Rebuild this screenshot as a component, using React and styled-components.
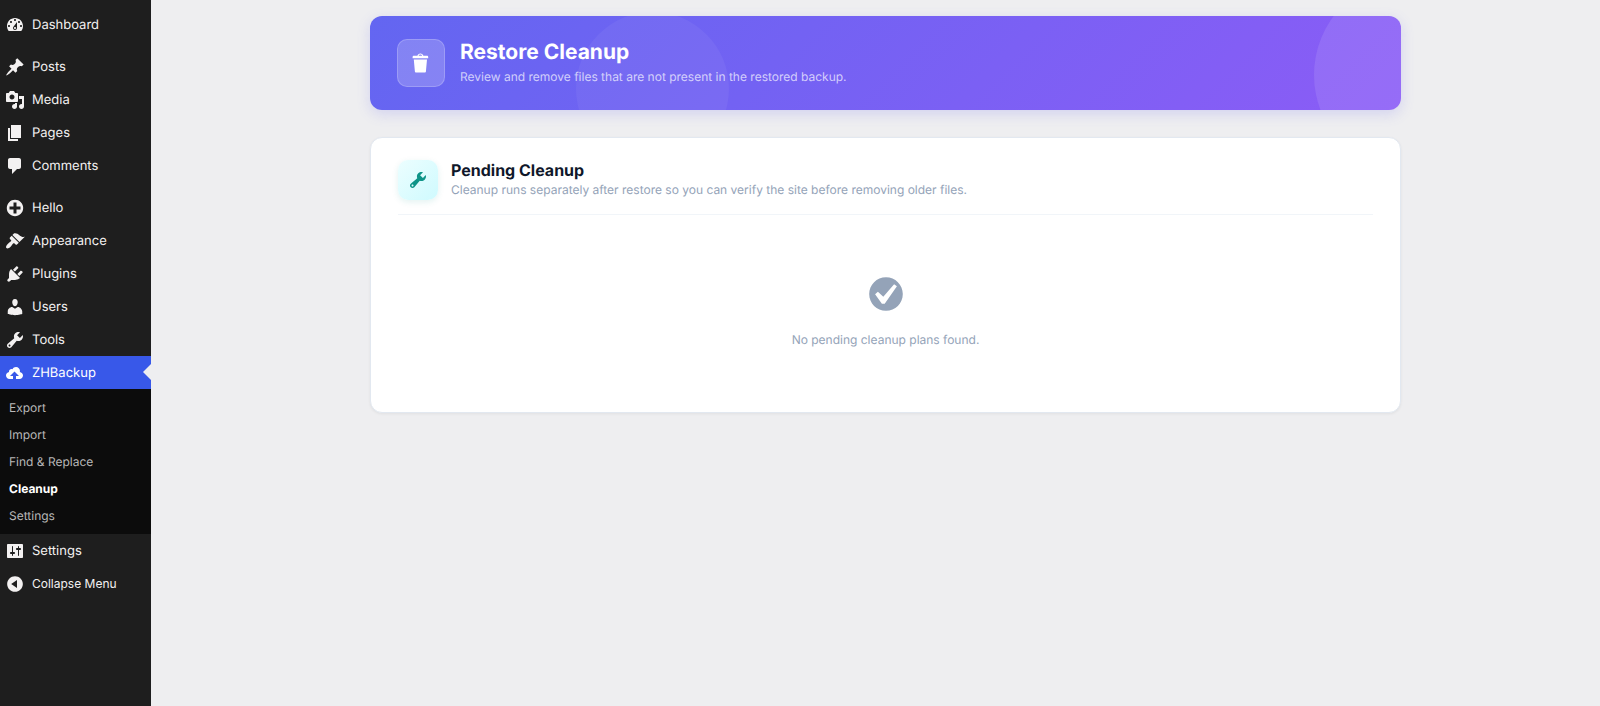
import React from "react";
import styled, { createGlobalStyle, css } from "styled-components";

const ICONS = {
  dashboard:
    "M3.76 16h12.48c1.1-1.37 1.76-3.11 1.76-5 0-4.42-3.58-8-8-8s-8 3.58-8 8c0 1.89.66 3.63 1.76 5zM10 4c.55 0 1 .45 1 1s-.45 1-1 1-1-.45-1-1 .45-1 1-1zM6 6c.55 0 1 .45 1 1s-.45 1-1 1-1-.45-1-1 .45-1 1-1zm8 0c.55 0 1 .45 1 1s-.45 1-1 1-1-.45-1-1 .45-1 1-1zm-5.37 5.55L12 7v6c0 1.1-.9 2-2 2s-2-.9-2-2c0-.57.24-1.08.63-1.45zM4 10c.55 0 1 .45 1 1s-.45 1-1 1-1-.45-1-1 .45-1 1-1zm12 0c.55 0 1 .45 1 1s-.45 1-1 1-1-.45-1-1 .45-1 1-1zm-5 3c0-.55-.45-1-1-1s-1 .45-1 1 .45 1 1 1 1-.45 1-1z",
  posts:
    "M10.44 3.02l1.82-1.82 6.36 6.35-1.83 1.82c-1.05-.68-2.48-.57-3.41.36l-.75.75c-.92.93-1.04 2.35-.35 3.41l-1.83 1.82-2.41-2.41-2.8 2.79c-.42.42-3.38 2.71-3.8 2.29s1.86-3.39 2.28-3.81l2.79-2.79L4.1 9.36l1.83-1.82c1.05.69 2.48.57 3.4-.36l.75-.75c.93-.92 1.05-2.35.36-3.41z",
  media:
    "M13 11V4c0-.55-.45-1-1-1h-1.67L9 1H5L3.67 3H2c-.55 0-1 .45-1 1v7c0 .55.45 1 1 1h10c.55 0 1-.45 1-1zM7 4.5c1.38 0 2.5 1.12 2.5 2.5S8.38 9.5 7 9.5 4.5 8.38 4.5 7 5.62 4.5 7 4.5zM14 6h5v10.5c0 1.38-1.12 2.5-2.5 2.5S14 17.88 14 16.5s1.12-2.5 2.5-2.5c.17 0 .34.02.5.05V9h-3V6zm-4 8.05V13h2v3.5c0 1.38-1.12 2.5-2.5 2.5S7 17.88 7 16.5 8.12 14 9.5 14c.17 0 .34.02.5.05z",
  pages: "M6 15V2h10v13H6zm-1 1h8v2H3V5h2v11z",
  comments:
    "M5 2h9c1.1 0 2 .9 2 2v7c0 1.1-.9 2-2 2h-2l-5 5v-5H5c-1.1 0-2-.9-2-2V4c0-1.1.9-2 2-2z",
  plus:
    "M15.8 4.2c3.2 3.21 3.2 8.39 0 11.6-3.21 3.2-8.39 3.2-11.6 0C1 12.59 1 7.41 4.2 4.2 7.41 1 12.59 1 15.8 4.2zm-4.3 11.3v-4h4v-3h-4v-4h-3v4h-4v3h4v4h3z",
  appearance:
    "M14.48 11.06L7.41 3.99l1.5-1.5c.5-.56 2.3-.47 3.51.32 1.21.8 1.43 1.28 2.91 2.1 1.18.64 2.45 1.26 4.45.85zm-.71.71L6.7 4.7 4.93 6.47c-.39.39-.39 1.02 0 1.41l1.06 1.06c.39.39.39 1.03 0 1.42-.6.6-1.43 1.11-2.21 1.69-.35.26-.7.53-1.01.84C1.43 14.23.4 16.08 1.4 17.07c.99 1 2.84-.03 4.18-1.36.31-.31.58-.66.85-1.02.57-.78 1.08-1.61 1.69-2.21.39-.39 1.02-.39 1.41 0l1.06 1.06c.39.39 1.02.39 1.41 0z",
  plugins:
    "M13.11 4.36L9.87 7.6 8 5.73l3.24-3.24c.35-.34 1.05-.2 1.56.32.52.51.66 1.21.31 1.55zm-8 1.77l.91-1.12 9.01 9.01-1.19.84c-.71.71-2.63 1.16-3.82 1.16H6.14L4.9 17.26c-.59.59-1.54.59-2.12 0-.59-.58-.59-1.53 0-2.12l1.24-1.24v-3.88c0-1.13.4-3.19 1.09-3.89zm7.26 3.97l3.24-3.24c.34-.35 1.04-.21 1.55.31.52.51.66 1.21.31 1.55l-3.24 3.25z",
  users:
    "M10 9.25c-2.27 0-2.73-3.44-2.73-3.44C7 4.02 7.82 2 9.97 2c2.16 0 2.98 2.02 2.71 3.81 0 0-.41 3.44-2.68 3.44zm0 2.57L12.72 10c2.39 0 4.52 2.33 4.52 4.53v2.49s-3.65 1.13-7.24 1.13c-3.65 0-7.24-1.13-7.24-1.13v-2.49c0-2.25 1.94-4.48 4.47-4.48z",
  tools:
    "M16.68 9.77c-1.34 1.34-3.3 1.67-4.95.99l-5.41 6.52c-.99.99-2.59.99-3.58 0s-.99-2.59 0-3.57l6.52-5.42c-.68-1.65-.35-3.61.99-4.95 1.28-1.28 3.12-1.62 4.72-1.06l-2.89 2.89 2.82 2.82 2.86-2.87c.53 1.58.18 3.39-1.08 4.65zM3.81 16.21c.4.39 1.04.39 1.43 0 .4-.4.4-1.04 0-1.43-.39-.4-1.03-.4-1.43 0-.39.39-.39 1.03 0 1.43z",
  cloud:
    "M14.8 9c.1-.3.2-.6.2-1 0-2.2-1.8-4-4-4-1.5 0-2.9.9-3.5 2.2-.3-.1-.7-.2-1-.2C5.1 6 4 7.1 4 8.5c0 .2 0 .4.1.5-1.8.3-3.1 1.7-3.1 3.5C1 14.4 2.6 16 4.5 16H8v-3H5l4.5-4.5L14 13h-3v3h3.5c1.9 0 3.5-1.6 3.5-3.5 0-1.8-1.4-3.3-3.2-3.5z",
  settings:
    "M18 16V4c0-.55-.45-1-1-1H3c-.55 0-1 .45-1 1v12c0 .55.45 1 1 1h14c.55 0 1-.45 1-1zM8 11h1c.55 0 1 .45 1 1s-.45 1-1 1H8v1.5c0 .28-.22.5-.5.5s-.5-.22-.5-.5V13H6c-.55 0-1-.45-1-1s.45-1 1-1h1V5.5c0-.28.22-.5.5-.5s.5.22.5.5V11zm5-2h-1c-.55 0-1-.45-1-1s.45-1 1-1h1V5.5c0-.28.22-.5.5-.5s.5.22.5.5V7h1c.55 0 1 .45 1 1s-.45 1-1 1h-1v5.5c0 .28-.22.5-.5.5s-.5-.22-.5-.5V9z",
  collapse:
    "M10 2.16c4.33 0 7.84 3.51 7.84 7.84s-3.51 7.84-7.84 7.84S2.16 14.33 2.16 10 5.71 2.16 10 2.16zm2 11.72V6.12L6.18 9.97z",
  trash:
    "M12 4h3c.6 0 1 .4 1 1v1H3V5c0-.6.5-1 1-1h3c.2-1.1 1.3-2 2.5-2s2.3.9 2.5 2zM8 4h3c-.2-.6-.9-1-1.5-1S8.2 3.4 8 4zM4 7h11l-.9 10.1c0 .5-.5.9-1 .9H5.9c-.5 0-.9-.4-1-.9L4 7z",
  check:
    "M10 2c-4.42 0-8 3.58-8 8s3.58 8 8 8 8-3.58 8-8-3.58-8-8-8zm-.615 12.66h-1.34l-3.24-4.54 1.341-1.25 2.569 2.4 5.141-5.931 1.34.94-5.811 8.381z",
};

const MENU_GROUPS = [
  [{ label: "Dashboard", icon: "dashboard" }],
  [
    { label: "Posts", icon: "posts" },
    { label: "Media", icon: "media" },
    { label: "Pages", icon: "pages" },
    { label: "Comments", icon: "comments" },
  ],
  [
    { label: "Hello", icon: "plus" },
    { label: "Appearance", icon: "appearance" },
    { label: "Plugins", icon: "plugins" },
    { label: "Users", icon: "users" },
    { label: "Tools", icon: "tools" },
    {
      label: "ZHBackup",
      icon: "cloud",
      active: true,
      children: ["Export", "Import", "Find & Replace", "Cleanup", "Settings"],
    },
    { label: "Settings", icon: "settings" },
  ],
];

const CURRENT_PAGE = "Cleanup";

const Icon = ({ name, size = 20 }) => (
  <svg width={size} height={size} viewBox="0 0 20 20" fill="currentColor" fillRule="evenodd" aria-hidden="true">
    <path d={ICONS[name]} />
  </svg>
);

const Sidebar = () => (
  <SidebarWrapper>
    {MENU_GROUPS.map((group, index) => (
      <MenuGroup key={index}>
        {group.map((item) => (
          <li key={item.label}>
            <MenuLink href="#" $active={item.active}>
              <Icon name={item.icon} />
              {item.label}
            </MenuLink>
            {item.children && (
              <SubMenu>
                {item.children.map((child) => (
                  <li key={child}>
                    <SubMenuLink href="#" $current={child === CURRENT_PAGE}>
                      {child}
                    </SubMenuLink>
                  </li>
                ))}
              </SubMenu>
            )}
          </li>
        ))}
      </MenuGroup>
    ))}
    <CollapseButton type="button">
      <Icon name="collapse" />
      Collapse Menu
    </CollapseButton>
  </SidebarWrapper>
);

const App = () => {
  return (
    <>
      <GlobalStyle />
      <Layout>
        <Sidebar />
        <Main>
          <Content>
            <Banner>
              <BannerIcon>
                <Icon name="trash" size={24} />
              </BannerIcon>
              <div>
                <BannerTitle>Restore Cleanup</BannerTitle>
                <BannerText>Review and remove files that are not present in the restored backup.</BannerText>
              </div>
            </Banner>
            <Card>
              <CardHeader>
                <CardIcon>
                  <Icon name="tools" />
                </CardIcon>
                <div>
                  <CardTitle>Pending Cleanup</CardTitle>
                  <CardText>
                    Cleanup runs separately after restore so you can verify the site before removing older files.
                  </CardText>
                </div>
              </CardHeader>
              <EmptyState>
                <Icon name="check" size={42} />
                <p>No pending cleanup plans found.</p>
              </EmptyState>
            </Card>
          </Content>
        </Main>
      </Layout>
    </>
  );
};

const GlobalStyle = createGlobalStyle`
  * {
    box-sizing: border-box;
  }

  body {
    margin: 0;
    background: #eeeef0;
    font-family: Inter, "Liberation Sans", sans-serif;
    font-size: 12px;
    text-rendering: geometricPrecision;
  }

  h1, h2, p, ul {
    margin: 0;
    padding: 0;
  }

  ul {
    list-style: none;
  }

  svg {
    display: block;
    flex: none;
  }
`;

const Layout = styled.div`
  display: flex;
  min-height: 100vh;
`;

const SidebarWrapper = styled.nav`
  flex: none;
  width: 151px;
  padding-top: 8px;
  background: #1e1e1e;
`;

const MenuGroup = styled.ul`
  & + & {
    margin-top: 9px;
  }
`;

const menuRow = css`
  display: flex;
  align-items: center;
  gap: 7px;
  width: 100%;
  height: 33px;
  padding: 0 5px;
  color: #f3f1f1;
  font-size: 13px;
  line-height: 18px;
`;

const MenuLink = styled.a`
  ${menuRow}
  position: relative;
  text-decoration: none;

  ${({ $active }) =>
    $active &&
    css`
      background: #3858e9;
      color: #fff;

      /* notch pointing at the page */
      &::after {
        content: "";
        position: absolute;
        top: 8px;
        right: 0;
        border: 8px solid transparent;
        border-left-width: 0;
        border-right-color: #eeeef0;
      }
    `}
`;

const CollapseButton = styled.button`
  ${menuRow}
  border: 0;
  background: none;
  font-family: inherit;
  font-size: 12px;
  text-align: left;
  cursor: pointer;
`;

const SubMenu = styled.ul`
  padding: 5px 0;
  background: #0c0c0c;
`;

const SubMenuLink = styled.a`
  display: block;
  padding: 5px 9px 4px;
  color: ${({ $current }) => ($current ? "#fff" : "#b8b8b8")};
  font-size: 12px;
  font-weight: ${({ $current }) => ($current ? 700 : 400)};
  line-height: 18px;
  text-decoration: none;
`;

const Main = styled.main`
  flex: 1;
  min-width: 0;
  padding: 16px 20px 16px 40px;
`;

const Content = styled.div`
  display: flex;
  flex-direction: column;
  gap: 27px;
  max-width: 1031px;
  margin: 0 auto;
`;

const Banner = styled.header`
  position: relative;
  display: flex;
  align-items: center;
  gap: 15px;
  padding: 23px 27px;
  overflow: hidden;
  border-radius: 12px;
  background: linear-gradient(135deg, #6366f1 0%, #8b5cf6 100%);
  box-shadow: 0 4px 14px rgba(99, 102, 241, 0.2);
  color: #fff;

  &::before,
  &::after {
    content: "";
    position: absolute;
    border-radius: 50%;
  }

  &::before {
    top: -39px;
    right: -109px;
    width: 196px;
    height: 196px;
    background: rgba(255, 255, 255, 0.1);
  }

  &::after {
    top: -4px;
    left: 20%;
    width: 153px;
    height: 153px;
    background: rgba(255, 255, 255, 0.05);
  }
`;

const BannerIcon = styled.div`
  display: grid;
  flex: none;
  place-items: center;
  width: 48px;
  height: 48px;
  border: 1px solid rgba(255, 255, 255, 0.2);
  border-radius: 10px;
  background: rgba(255, 255, 255, 0.2);
`;

const BannerTitle = styled.h1`
  font-size: 21px;
  font-weight: 700;
  line-height: 28px;
`;

const BannerText = styled.p`
  color: rgba(255, 255, 255, 0.7);
  line-height: 20px;
`;

const Card = styled.section`
  padding: 22px 27px;
  border: 1px solid #e2e8f0;
  border-radius: 12px;
  background: #fff;
  box-shadow: 0 1px 3px rgba(0, 0, 0, 0.06);
`;

const CardHeader = styled.div`
  display: flex;
  align-items: center;
  gap: 13px;
  padding-bottom: 14px;
  border-bottom: 1px solid #f1f5f9;
`;

const CardIcon = styled.div`
  display: grid;
  flex: none;
  place-items: center;
  width: 40px;
  height: 40px;
  border-radius: 10px;
  background: linear-gradient(135deg, #ecfeff, #cffafe);
  box-shadow: 0 2px 6px rgba(13, 148, 136, 0.12);
  color: #0d9488;
`;

const CardTitle = styled.h2`
  color: #0f172a;
  font-size: 16px;
  font-weight: 700;
  line-height: 20px;
`;

const CardText = styled.p`
  color: #94a3b8;
  line-height: 20px;
`;

const EmptyState = styled.div`
  display: flex;
  flex-direction: column;
  align-items: center;
  gap: 15px;
  padding: 58px 20px 40px;
  color: #94a3b8;
  line-height: 20px;
`;

export default App;
